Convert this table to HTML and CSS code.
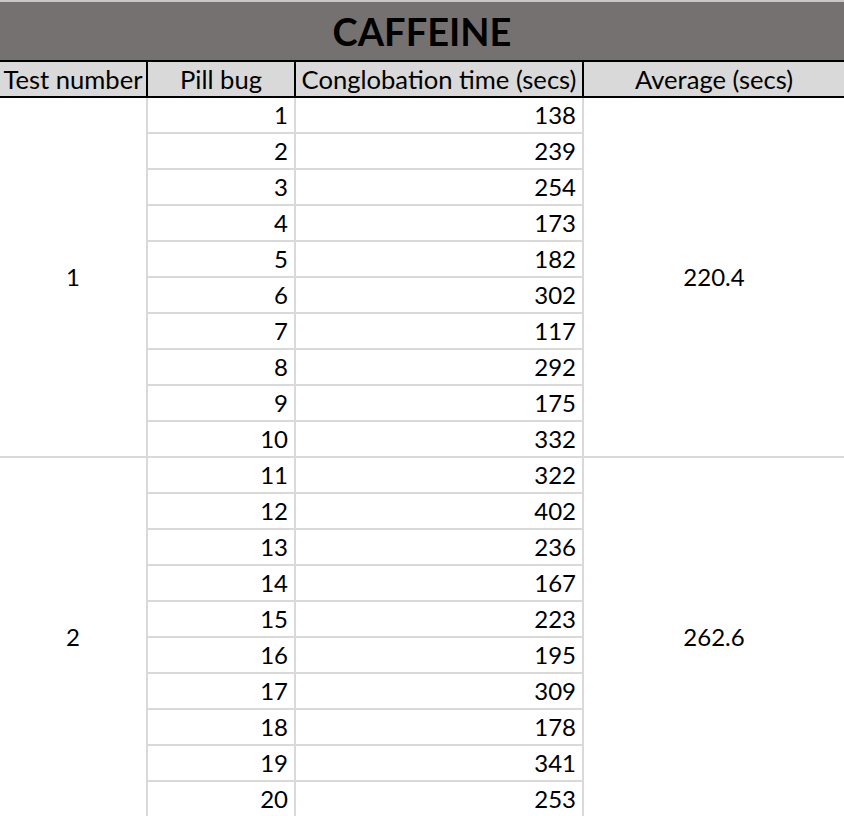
FILE: index.html
```html
<!DOCTYPE html>
<html>
<head>
<meta charset="utf-8">
<link rel="stylesheet" href="styles.css">
</head>
<body>
<div class="sheet">
  <div class="title">CAFFEINE</div>
  <table class="grid">
    <colgroup>
      <col class="c1"><col class="c2"><col class="c3"><col class="c4">
    </colgroup>
    <thead>
      <tr>
        <th>Test number</th>
        <th>Pill bug</th>
        <th>Conglobation time (secs)</th>
        <th>Average (secs)</th>
      </tr>
    </thead>
    <tbody>
      <tr><td class="mid" rowspan="10">1</td><td class="num">1</td><td class="num">138</td><td class="mid" rowspan="10">220.4</td></tr>
      <tr><td class="num">2</td><td class="num">239</td></tr>
      <tr><td class="num">3</td><td class="num">254</td></tr>
      <tr><td class="num">4</td><td class="num">173</td></tr>
      <tr><td class="num">5</td><td class="num">182</td></tr>
      <tr><td class="num">6</td><td class="num">302</td></tr>
      <tr><td class="num">7</td><td class="num">117</td></tr>
      <tr><td class="num">8</td><td class="num">292</td></tr>
      <tr><td class="num">9</td><td class="num">175</td></tr>
      <tr><td class="num">10</td><td class="num">332</td></tr>
      <tr><td class="mid" rowspan="10">2</td><td class="num">11</td><td class="num">322</td><td class="mid" rowspan="10">262.6</td></tr>
      <tr><td class="num">12</td><td class="num">402</td></tr>
      <tr><td class="num">13</td><td class="num">236</td></tr>
      <tr><td class="num">14</td><td class="num">167</td></tr>
      <tr><td class="num">15</td><td class="num">223</td></tr>
      <tr><td class="num">16</td><td class="num">195</td></tr>
      <tr><td class="num">17</td><td class="num">309</td></tr>
      <tr><td class="num">18</td><td class="num">178</td></tr>
      <tr><td class="num">19</td><td class="num">341</td></tr>
      <tr><td class="num">20</td><td class="num">253</td></tr>
    </tbody>
  </table>
</div>
</body>
</html>
```
FILE: styles.css
```css
html, body {
  margin: 0;
  padding: 0;
  background: #ffffff;
}
body {
  font-family: "Lato", "Liberation Sans", sans-serif;
  color: #000;
  overflow: hidden;
}
.sheet {
  width: 844px;
}
.title {
  height: 58px;
  border-top: 2px solid #c8c8c8;
  background: #767171;
  text-align: center;
  font-weight: bold;
  font-size: 38px;
  line-height: 58px;
  color: #000;
}
.grid {
  border-collapse: collapse;
  table-layout: fixed;
  width: 844px;
}
.c1 { width: 147px; }
.c2 { width: 148px; }
.c3 { width: 288px; }
.c4 { width: 261px; }
.grid th {
  background: #d9d9d9;
  border: 2px solid #000;
  border-left: none;
  height: 34px;
  padding: 0;
  font-weight: normal;
  font-size: 25.6px;
  white-space: nowrap;
  overflow: hidden;
  text-align: center;
  line-height: 34px;
}
.grid th:last-child {
  border-right: none;
}
.grid th:first-child {
  border-left: none;
}
.grid td {
  border: 2px solid #d9d9d9;
  height: 34px;
  padding: 0 6px 0 0;
  font-size: 24px;
  line-height: 34px;
}
.grid td:first-child { border-left: none; }
.grid td:last-child { border-right: none; }
.grid td.num { text-align: right; }
.grid td.mid { text-align: center; padding: 0; }
```
